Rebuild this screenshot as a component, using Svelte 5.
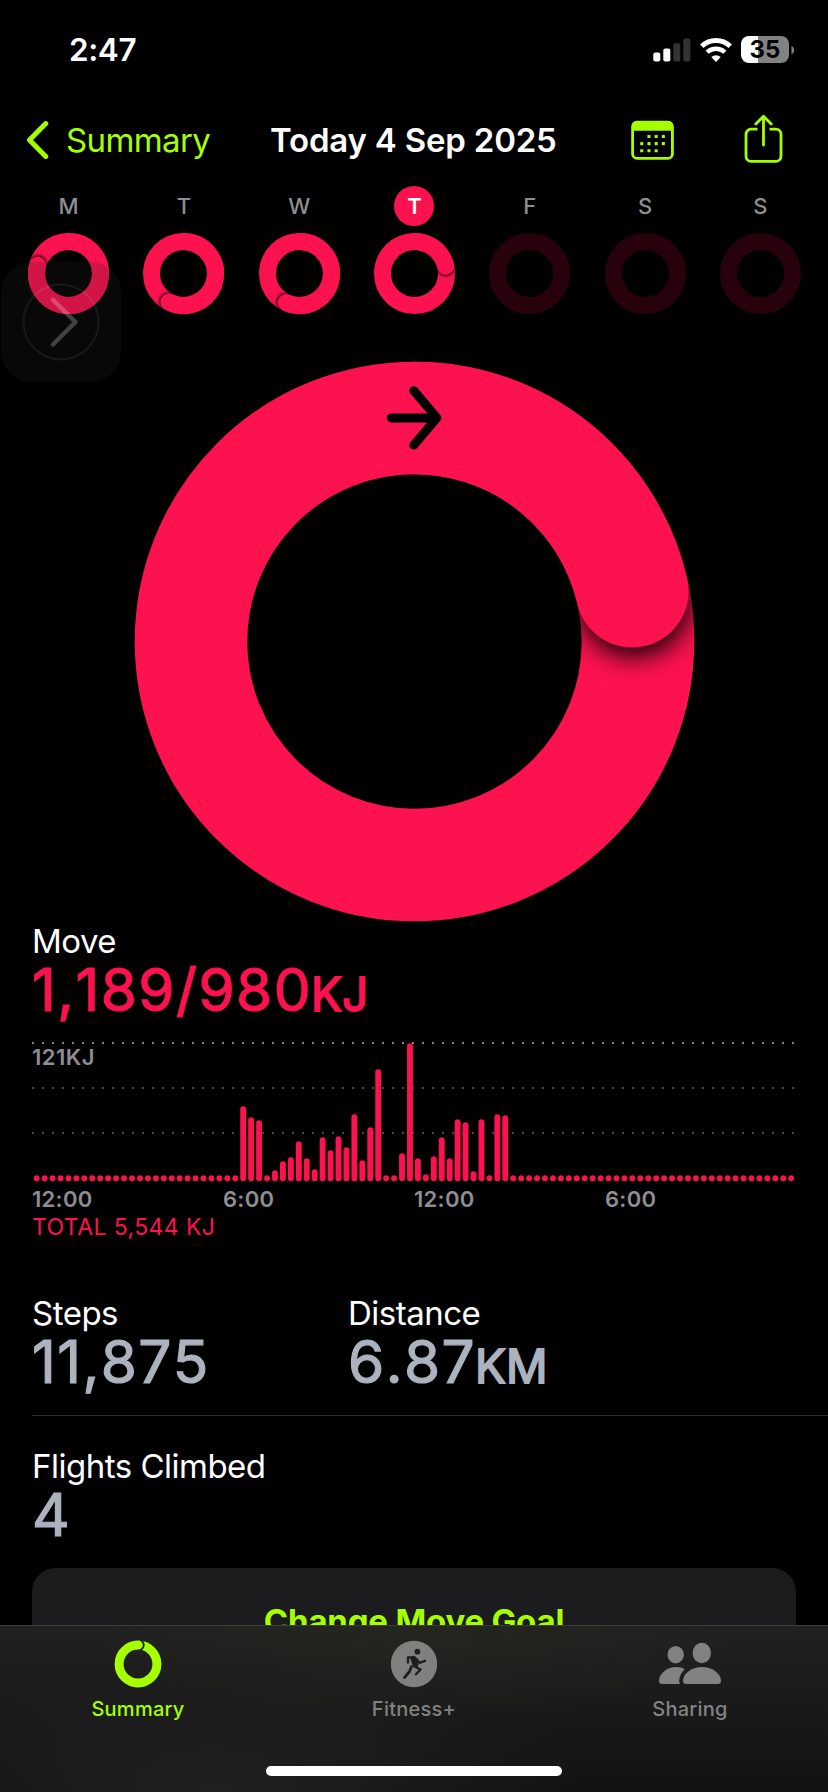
<script lang="ts">
    const pink = '#fc124f';

    const days = [
        { letter: 'M', end: 285 },
        { letter: 'T', end: 207 },
        { letter: 'W', end: 204.5 },
        { letter: 'T', end: 77, today: true },
        { letter: 'F' },
        { letter: 'S' },
        { letter: 'S' }
    ];

    // one bar per 15 minutes, the day starts at midnight
    const active = [
        75, 64, 61, 6, 11, 20, 24, 40, 23, 12, 44, 31, 45, 34, 67, 21, 54,
        112, 6, 6, 28, 138, 23, 7, 25, 44, 23, 62, 59, 10, 62, 6, 67, 66
    ];
    const bars = Array.from({ length: 96 }, (_, i) => active[i - 26] ?? 6);

    const hours = ['12:00', '6:00', '12:00', '6:00'];

    function point(deg: number, r: number) {
        const a = (deg * Math.PI) / 180;
        return { x: r * Math.sin(a), y: -r * Math.cos(a) };
    }

    function arc(deg: number, r: number) {
        const p = point(deg, r);
        return `M0 ${-r}A${r} ${r} 0 ${deg > 180 ? 1 : 0} 1 ${p.x} ${p.y}`;
    }
</script>

{#snippet ring(id: string, end: number, r: number, width: number, blur: number, offset: number)}
    {@const cap = point(end, r)}
    {@const dir = point(end + 90, offset)}
    <mask id="{id}-mask" maskUnits="userSpaceOnUse" x="-300" y="-300" width="600" height="600">
        <circle {r} fill="none" stroke="#fff" stroke-width={width} />
    </mask>
    <filter id="{id}-blur" x="-100%" y="-100%" width="300%" height="300%">
        <feGaussianBlur stdDeviation={blur} />
    </filter>
    <circle {r} fill="none" stroke={pink} stroke-width={width} />
    <g mask="url(#{id}-mask)">
        <circle cx={cap.x + dir.x} cy={cap.y + dir.y} r={width / 2} fill="#000" fill-opacity="0.95" filter="url(#{id}-blur)" />
    </g>
    <path d={arc(end, r)} fill="none" stroke={pink} stroke-width={width} stroke-linecap="round" />
{/snippet}

<div class="screen">
    <header class="status">
        <span class="time">2:47</span>
        <div class="indicators">
            <svg class="signal" width="38" height="24" viewBox="0 0 38 24">
                <rect x="0.3" y="14.5" width="7" height="9" rx="2" fill="#fff" />
                <rect x="10.3" y="10.5" width="7" height="13" rx="2" fill="#fff" />
                <rect x="20.3" y="5.3" width="7" height="18.2" rx="2" fill="#333" />
                <rect x="30.3" y="0.5" width="7" height="23" rx="2" fill="#333" />
            </svg>
            <svg class="wifi" width="32" height="24" viewBox="0 0 32 24" fill="none" stroke="#fff">
                <path d="M1.8 8.3a20.3 20.3 0 0 1 28.4 0" stroke-width="4.8" />
                <path d="M7.2 14.3a12.6 12.6 0 0 1 17.6 0" stroke-width="4.4" />
                <path d="M16 24l-4.7-4.9a6.8 6.8 0 0 1 9.4 0z" fill="#fff" stroke="none" />
            </svg>
            <div class="battery">
                <span>35</span>
            </div>
            <svg class="nub" width="4" height="10" viewBox="0 0 4 10">
                <path d="M0.5 0.8a4.6 4.6 0 0 1 0 8.4z" fill="#828282" />
            </svg>
        </div>
    </header>

    <nav class="navbar">
        <a class="back" href="#summary">
            <svg width="24" height="40" viewBox="0 0 24 40">
                <path d="M20.8 3.6L4.5 20l16.3 16.4" fill="none" stroke="#a6ff00" stroke-width="5" stroke-linecap="round" stroke-linejoin="round" />
            </svg>
            <span>Summary</span>
        </a>
        <h1>Today 4 Sep 2025</h1>
        <div class="actions">
            <svg width="43" height="40" viewBox="0 0 43 40">
                <rect x="1.6" y="2.1" width="39.8" height="36.3" rx="4.5" fill="none" stroke="#a6ff00" stroke-width="2.8" />
                <path d="M1 10.7V6a5 5 0 0 1 5-5h31a5 5 0 0 1 5 5v4.7z" fill="#a6ff00" />
                {#each [[1, 0], [2, 0], [3, 0], [0, 1], [1, 1], [2, 1], [3, 1], [0, 2], [1, 2], [2, 2]] as [col, row]}
                    <rect x={9.2 + col * 7.2} y={15 + row * 7.1} width="3.1" height="3.1" rx="0.6" fill="#a6ff00" />
                {/each}
            </svg>
            <svg class="share" width="39" height="50" viewBox="0 0 39 50" fill="none" stroke="#a6ff00" stroke-width="2.8">
                <path d="M13.5 16.2H7a5 5 0 0 0-5 5V43.3a5 5 0 0 0 5 5h25a5 5 0 0 0 5-5V21.2a5 5 0 0 0-5-5h-6.5" />
                <path d="M19.5 32V3.4M11.8 11l7.7-7.8 7.7 7.8" stroke-linecap="round" stroke-linejoin="round" />
            </svg>
        </div>
    </nav>

    <section class="week">
        {#each days as day, i}
            <div class="day">
                <span class="letter" class:today={day.today}>{day.letter}</span>
                <svg width="83" height="83" viewBox="-41.5 -41.5 83 83">
                    {#if day.end}
                        {@render ring(`day${i}`, day.end, 32, 17, 1.6, 1.2)}
                    {:else}
                        <circle r="32" fill="none" stroke="#27010b" stroke-width="17" />
                    {/if}
                </svg>
            </div>
        {/each}
    </section>

    <div class="move-ring">
        <svg width="563" height="561" viewBox="-281.5 -280.5 563 561">
            {@render ring('move', 77, 223.5, 112.6, 13, 9)}
            <path d="M-23.3 -223.6H22M-0.7 -250.8L22.3 -223.6L-0.7 -196.4" fill="none" stroke="#000" stroke-width="9" stroke-linecap="round" stroke-linejoin="round" />
        </svg>
    </div>

    <section class="move">
        <div class="label">Move</div>
        <div class="value pink">1,189/980<small>KJ</small></div>
        <div class="chart">
            <svg width="764" height="140" viewBox="0 0 764 140">
                {#each [1, 46, 91] as y}
                    <line x1="0" x2="764" y1={y} y2={y} stroke={y === 1 ? '#858585' : '#484848'} stroke-width="2" stroke-dasharray="2 8" />
                {/each}
                {#each bars as height, i}
                    <rect x={1.75 + i * 7.942} y={139.2 - height} width="5.9" {height} rx="2.95" fill={pink} />
                {/each}
            </svg>
            <span class="peak">121KJ</span>
        </div>
        <div class="hours">
            {#each hours as hour}
                <span>{hour}</span>
            {/each}
        </div>
        <div class="total">TOTAL 5,544 KJ</div>
    </section>

    <section class="stats">
        <div class="stat">
            <div class="label">Steps</div>
            <div class="value">11,875</div>
        </div>
        <div class="stat">
            <div class="label">Distance</div>
            <div class="value">6.87<small>KM</small></div>
        </div>
    </section>

    <section class="flights">
        <div class="label">Flights Climbed</div>
        <div class="value">4</div>
    </section>

    <button class="goal">Change Move Goal</button>

    <!-- floating assistive button -->
    <div class="floating">
        <svg width="120" height="120" viewBox="0 0 120 120" fill="none" stroke="#fff">
            <circle cx="60" cy="60" r="37.5" stroke-width="2" stroke-opacity="0.07" />
            <path d="M52 38l22.5 22L52 82.5" stroke-width="4.5" stroke-opacity="0.23" stroke-linecap="round" stroke-linejoin="round" />
        </svg>
    </div>

    <footer class="tabs">
        <div class="tab selected">
            <svg width="64" height="48" viewBox="-32 -24 64 48">
                <circle r="18.9" fill="none" stroke="#a6ff00" stroke-width="9" />
                <path d="M0.5 -18.9h0.8" stroke="#1e1e1d" stroke-width="10.8" stroke-linecap="round" />
                <path d="M-2 -18.8A18.9 18.9 0 0 1 0.3 -18.9" fill="none" stroke="#a6ff00" stroke-width="9" stroke-linecap="round" />
            </svg>
            <span>Summary</span>
        </div>
        <div class="tab">
            <svg width="64" height="48" viewBox="-32 -24 64 48">
                <circle r="23.2" fill="#80807f" />
                <g fill="none" stroke="#1e1f1b" stroke-width="2.4" stroke-linecap="round" stroke-linejoin="round">
                    <circle cx="3.4" cy="-12.3" r="2.9" fill="#1e1f1b" stroke="none" />
                    <path d="M-6 -1.5V-6.6H-1" />
                    <path d="M-0.5 -5.2L1.5 0.5" stroke-width="6" />
                    <path d="M2.5 -5L5.5 -1.2L11 -3.2" />
                    <path d="M0.5 2.5L6.5 5.5L2 10.3" />
                    <path d="M-2.5 2.5L-4.5 7.5L-9.5 13.5" stroke-width="2.8" />
                </g>
            </svg>
            <span>Fitness+</span>
        </div>
        <div class="tab">
            <svg width="64" height="48" viewBox="0 0 64 48" fill="#828282">
                <ellipse cx="17.7" cy="14.7" rx="8.2" ry="8.7" />
                <ellipse cx="43.8" cy="13" rx="9.2" ry="10.2" />
                <path d="M22.2 44H4a3 3 0 0 1-3-3c0-7 7.5-14 17-14 3.7 0 6.5.8 8.8 2.2-3.3 3-5.6 7-5.6 11.8 0 1.2.3 2.2 1 3z" />
                <path d="M28 44a3 3 0 0 1-3-3c0-7 8-14 19-14s19 7 19 14a3 3 0 0 1-3 3z" />
            </svg>
            <span>Sharing</span>
        </div>
        <div class="home"></div>
    </footer>
</div>

<style>
    :global(body) {
        background: #000;
    }

    .screen {
        position: relative;
        width: 828px;
        height: 1792px;
        overflow: hidden;
        background: #000;
        color: #fff;
        font-family: Inter, "Liberation Sans", sans-serif;
    }

    svg {
        display: block;
        flex: none;
    }

    .status {
        display: flex;
        justify-content: space-between;
        align-items: center;
        height: 99px;
        padding: 0 33px 0 69px;
    }

    .time {
        font-size: 31.5px;
        font-weight: 600;
        letter-spacing: -0.4px;
    }

    .indicators {
        display: flex;
        align-items: center;
    }

    .wifi {
        margin-left: 9px;
    }

    .battery {
        width: 48px;
        height: 27px;
        margin-left: 9px;
        border-radius: 8px;
        background: linear-gradient(90deg, #fff 17px, #828282 17px);
        color: #000;
        font-size: 24px;
        font-weight: 700;
        line-height: 27px;
        text-align: center;
    }

    .nub {
        margin-left: 2px;
    }

    .navbar {
        display: grid;
        grid-template-columns: 270px 1fr 197px;
        align-items: center;
        height: 81px;
    }

    .back {
        display: flex;
        align-items: center;
        gap: 17px;
        padding-left: 25px;
        color: #a6ff00;
        font-size: 33px;
        letter-spacing: -0.6px;
        text-decoration: none;
    }

    h1 {
        margin: 0;
        font-size: 33px;
        font-weight: 600;
        letter-spacing: -0.2px;
        white-space: nowrap;
    }

    .actions {
        display: flex;
        align-items: center;
        gap: 70px;
    }

    .share {
        margin-bottom: 4px;
    }

    .week {
        display: grid;
        grid-template-columns: repeat(7, 1fr);
        padding: 6px 10px 0 11px;
    }

    .day {
        display: flex;
        flex-direction: column;
        align-items: center;
        gap: 6px;
    }

    .letter {
        width: 40px;
        border-radius: 50%;
        color: #8e8e93;
        font-size: 22px;
        font-weight: 500;
        line-height: 40px;
        text-align: center;
    }

    .letter.today {
        background: #fc124f;
        color: #fff;
        font-weight: 600;
    }

    .move-ring {
        padding: 46px 0 0 133px;
    }

    .move {
        padding: 0 32px;
    }

    .label {
        font-size: 33px;
        line-height: 38px;
        letter-spacing: -0.5px;
    }

    .value {
        height: 59px;
        color: #adb2bf;
        font-size: 58.5px;
        font-weight: 400;
        font-kerning: none;
        line-height: 59px;
        letter-spacing: 1.4px;
        white-space: nowrap;
        -webkit-text-stroke: 1.2px;
    }

    .value small {
        margin-left: -1px;
        font-size: 46px;
        line-height: 0;
        letter-spacing: 0;
        -webkit-text-stroke: 1.8px;
    }

    .value.pink {
        color: #fc124f;
    }

    .chart {
        position: relative;
        margin-top: 23px;
    }

    .peak {
        position: absolute;
        top: 2px;
        left: 0;
        color: #8e8e93;
        font-size: 22px;
        font-weight: 600;
        line-height: 27px;
        letter-spacing: 0.5px;
    }

    .hours {
        display: grid;
        grid-template-columns: repeat(4, 191px);
        margin-top: 5px;
        color: #8e8e93;
        font-size: 22px;
        font-weight: 600;
        line-height: 25px;
        letter-spacing: 0.3px;
    }

    .total {
        color: #fc124f;
        font-size: 23px;
        line-height: 30px;
        letter-spacing: 0.4px;
    }

    .stats {
        display: grid;
        grid-template-columns: 316px 1fr;
        margin: 52px 0 0 32px;
        padding-bottom: 24px;
        border-bottom: 1px solid #303032;
    }

    .flights {
        padding: 31px 32px 0;
    }

    .goal {
        display: block;
        width: 764px;
        height: 106px;
        margin: 24px 32px 0;
        border: none;
        border-radius: 24px;
        background: #1c1c1e;
        color: #a6ff00;
        font-family: inherit;
        font-size: 33px;
        font-weight: 700;
        letter-spacing: -0.2px;
    }

    .floating {
        position: absolute;
        top: 262px;
        left: 1px;
        border-radius: 30px;
        background: rgba(38, 38, 38, 0.2);
    }

    .tabs {
        position: absolute;
        left: 0;
        right: 0;
        bottom: 0;
        display: grid;
        grid-template-columns: repeat(3, 276px);
        align-content: start;
        height: 166px;
        border-top: 1px solid #3c3d3c;
        background:
            radial-gradient(ellipse 330px 90px at 50% 0, rgba(38, 40, 30, 0.7), transparent),
            radial-gradient(ellipse 380px 130px at 26% 100%, rgba(36, 36, 36, 0.8), transparent),
            linear-gradient(#212121, #121212);
    }

    .tab {
        display: flex;
        flex-direction: column;
        align-items: center;
        padding-top: 14px;
        color: #828282;
        font-size: 20px;
        font-weight: 500;
        line-height: 24px;
        letter-spacing: 0.25px;
    }

    .tab span {
        margin-top: 9px;
    }

    .tab.selected {
        color: #a6ff00;
    }

    .home {
        position: absolute;
        left: 266px;
        bottom: 16px;
        width: 296px;
        height: 10px;
        border-radius: 5px;
        background: #fff;
    }
</style>
